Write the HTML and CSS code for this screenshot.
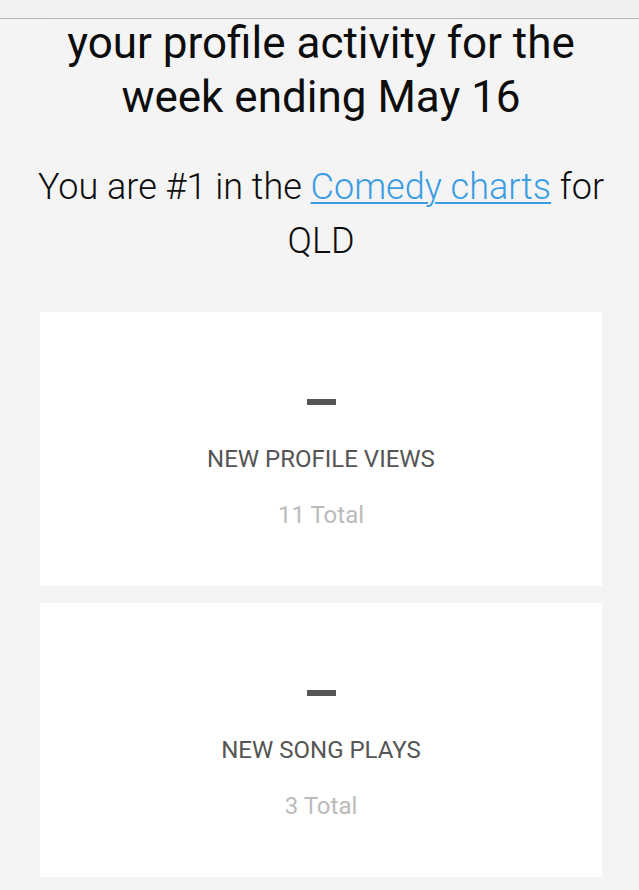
FILE: index.html
```html
<!DOCTYPE html>
<html>
<head>
<meta charset="utf-8">
<link rel="stylesheet" href="styles.css">
</head>
<body>
<div class="topbar"></div>
<main class="content">
  <h1 class="title">your profile activity for the week ending May 16</h1>
  <p class="rank">You are #1 in the <a class="link" href="#">Comedy charts</a> for QLD</p>
  <section class="stats">
    <div class="card">
      <div class="dash"></div>
      <div class="label">NEW PROFILE VIEWS</div>
      <div class="total">11 Total</div>
    </div>
    <div class="card">
      <div class="dash"></div>
      <div class="label">NEW SONG PLAYS</div>
      <div class="total">3 Total</div>
    </div>
  </section>
</main>
</body>
</html>
```
FILE: styles.css
```css
html, body {
  margin: 0;
  padding: 0;
  background: #f4f4f4;
  font-family: Roboto, "Noto Sans", sans-serif;
}
.topbar {
  position: relative;
  z-index: 1;
  height: 18px;
  background: linear-gradient(to right, #f1f1f1, #f3f3f3, #efefef);
  border-bottom: 1px solid #b8b8b8;
}
.content {
  padding: 0 37px 0 40px;
  display: flex;
  flex-direction: column;
}
.title {
  margin: -3px 0 0;
  font-size: 44px;
  line-height: 54px;
  font-weight: 400;
  color: #0d0d0d;
  text-align: center;
}
.rank {
  margin: 36px -8px 0 -8px;
  font-size: 36px;
  line-height: 54px;
  font-weight: 300;
  color: #0d0d0d;
  text-align: center;
}
.link {
  color: #3a9de3;
  text-decoration: underline;
  text-decoration-thickness: 2px;
  text-underline-offset: 3px;
}
.stats {
  margin-top: 44px;
  display: flex;
  flex-direction: column;
  gap: 17px;
}
.card {
  background: #fff;
  height: 274px;
  box-sizing: border-box;
  padding-top: 87px;
  display: flex;
  flex-direction: column;
  align-items: center;
}
.dash {
  width: 29px;
  height: 6px;
  background: #555;
}
.label {
  margin-top: 40px;
  font-size: 24px;
  line-height: 28px;
  color: #555;
}
.total {
  margin-top: 28px;
  font-size: 24px;
  line-height: 28px;
  color: #bbb;
}
```
